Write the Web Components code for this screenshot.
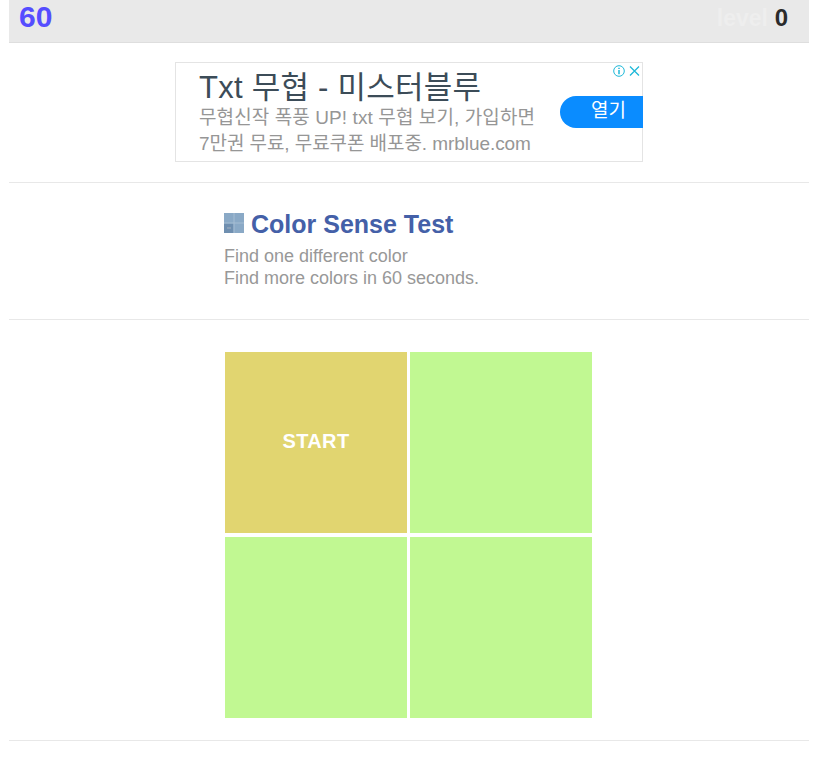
<!DOCTYPE html>
<html lang="en">
<head>
<meta charset="utf-8">
<title>Color Sense Test</title>
<style>
  html, body { margin: 0; background: #fff; overflow: hidden; }
  body { font-family: "Liberation Sans", Arial, sans-serif; }
</style>
</head>
<body>
<game-page>
  <score-bar time="60" level="0"></score-bar>
  <ad-banner></ad-banner>
  <game-intro></game-intro>
  <color-board></color-board>
</game-page>

<script>
const cjk = "'Liberation Sans', 'Noto Sans CJK KR', sans-serif"

customElements.define('game-page',
  class extends HTMLElement {
    constructor() {
      super()
      this.attachShadow({ mode: 'open' }).innerHTML = `
        <style>
          :host { display: block; width: 800px; margin-left: 9px; }
        </style>
        <slot></slot>
      `
    }
  }
)

customElements.define('score-bar',
  class extends HTMLElement {
    constructor() {
      super()
      this.attachShadow({ mode: 'open' }).innerHTML = `
        <style>
          :host {
            display: flex;
            justify-content: space-between;
            height: 42px;
            background: #e9e9e9;
            border-bottom: 1px solid #dedede;
            font-weight: bold;
            padding: 0 21px 0 10px;
          }
          .time { font-size: 30px; line-height: 34px; color: #554dff; }
          .level { font-size: 24px; line-height: 36px; color: #2b2b2b; }
          .level span { color: #eeeeee; font-size: 23px; }
        </style>
        <div class="time">${this.getAttribute('time')}</div>
        <div class="level"><span>level</span> ${this.getAttribute('level')}</div>
      `
    }
  }
)

customElements.define('ad-banner',
  class extends HTMLElement {
    constructor() {
      super()
      this.attachShadow({ mode: 'open' }).innerHTML = `
        <style>
          :host {
            display: flex;
            justify-content: center;
            padding: 19px 0 20px;
            border-bottom: 1px solid #e8e8e8;
          }
          .box {
            box-sizing: border-box;
            width: 468px;
            height: 100px;
            border: 1px solid #e4e4e4;
            display: flex;
            align-items: flex-start;
            position: relative;
            font-family: ${cjk};
          }
          .copy { flex: 1; padding: 7px 0 0 23px; }
          h2 { margin: 0 0 -1px; font-size: 31px; line-height: 36px; font-weight: normal; color: #3c4c58; white-space: nowrap; letter-spacing: .25px; }
          p { margin: 0; font-size: 19px; line-height: 25.5px; color: #969696; white-space: nowrap; }
          .wide { letter-spacing: .1px; }
          .tight { letter-spacing: -.07px; }
          .open {
            margin: 33px -1px 0 0;
            width: 83px;
            height: 32px;
            box-sizing: border-box;
            padding-left: 14px;
            background: #0a8cff;
            color: #fff;
            font-size: 19px;
            line-height: 30px;
            text-align: center;
            border-radius: 16px 0 0 16px;
            flex: none;
          }
          .marks { position: absolute; top: 2px; right: 2px; display: flex; gap: 4px; }
          svg { display: block; }
        </style>
        <div class="box">
          <div class="copy">
            <h2>Txt 무협 - 미스터블루</h2>
            <p class="wide">무협신작 폭풍 UP! txt 무협 보기, 가입하면</p>
            <p class="tight">7만권 무료, 무료쿠폰 배포중. mrblue.com</p>
          </div>
          <div class="open">열기</div>
          <div class="marks">
            <svg width="12" height="12" viewBox="0 0 12 12" fill="none" stroke="#1fb8d8">
              <circle cx="6" cy="6" r="5.3"/>
              <path d="M6 5v4.2M6 2.8v1.3" stroke-width="1.5"/>
            </svg>
            <svg width="11" height="12" viewBox="0 0 11 12" fill="none" stroke="#1fb8d8" stroke-width="1.3">
              <path d="M1 1.5l9 9M10 1.5l-9 9"/>
            </svg>
          </div>
        </div>
      `
    }
  }
)

customElements.define('game-intro',
  class extends HTMLElement {
    constructor() {
      super()
      this.attachShadow({ mode: 'open' }).innerHTML = `
        <style>
          :host {
            display: block;
            height: 136px;
            padding-left: 215px;
            border-bottom: 1px solid #e8e8e8;
          }
          h1 {
            margin: 0;
            padding-top: 26px;
            display: flex;
            align-items: center;
            gap: 7px;
            font-size: 25px;
            line-height: 30px;
            color: #4460a8;
          }
          p { margin: 6px 0 0; font-size: 18px; line-height: 22px; color: #989898; }
          svg { display: block; margin-top: -2px; }
        </style>
        <h1>
          <svg width="20" height="20" viewBox="0 0 20 20">
            <rect width="20" height="20" fill="#8aa9c6"/>
            <rect width="9.5" height="9.5" y="10.5" fill="#6f8fb0"/>
            <rect x="3" y="14" width="4" height="2" fill="#8aa0b8"/>
            <path d="M10 0v20M0 10h20" stroke="#a5bdd3" stroke-width="1"/>
          </svg>
          Color Sense Test
        </h1>
        <p>Find one different color<br>Find more colors in 60 seconds.</p>
      `
    }
  }
)

customElements.define('color-board',
  class extends HTMLElement {
    constructor() {
      super()
      this.attachShadow({ mode: 'open' }).innerHTML = `
        <style>
          :host {
            display: block;
            padding: 32px 0 22px 216px;
            border-bottom: 1px solid #e8e8e8;
          }
          .grid {
            display: grid;
            grid-template-columns: 182px 182px;
            grid-template-rows: 181px 181px;
            gap: 4px 3px;
            width: 367px;
          }
          .cell { background: #c1f892; }
          .start {
            background: #e1d570;
            color: #fff;
            font-size: 20px;
            letter-spacing: .4px;
            font-weight: bold;
            padding-bottom: 2px;
            box-sizing: border-box;
            display: flex;
            align-items: center;
            justify-content: center;
          }
        </style>
        <div class="grid">
          <div class="cell start">START</div>
          <div class="cell"></div>
          <div class="cell"></div>
          <div class="cell"></div>
        </div>
      `
    }
  }
)
</script>
</body>
</html>
